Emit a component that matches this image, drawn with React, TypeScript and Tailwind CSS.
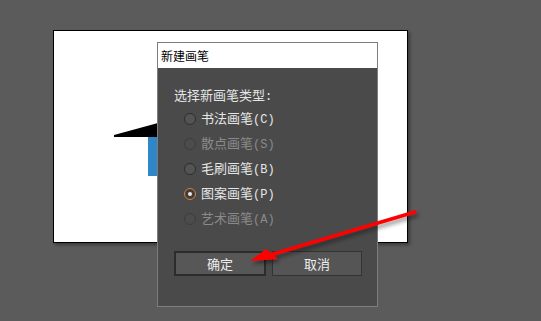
import React from "react";

const cjk = { fontFamily: '"Noto Sans CJK SC", "Noto Sans", sans-serif' };
const mono = { fontFamily: '"Liberation Mono", monospace' };

function Radio({ label, key2, state }: { label: string; key2: string; state: "on" | "off" | "disabled" }) {
  const disabled = state === "disabled";
  return (
    <div className="flex items-center h-[25px]">
      <span
        className={
          "w-[12px] h-[12px] rounded-full flex items-center justify-center border " +
          (state === "on"
            ? "border-[#d9822b] bg-[#3e3e3e]"
            : disabled
            ? "border-[#3d3d3d] bg-[#4c4c4c]"
            : "border-[#2e2e2e] bg-[#545454]")
        }
      >
        {state === "on" && <span className="w-[4px] h-[4px] rounded-full bg-[#e8e8e8]" />}
      </span>
      <span
        className={"ml-[5px] text-[13px] leading-none " + (disabled ? "text-[#8a8a8a]" : "text-[#e6e6e6]")}
        style={cjk}
      >
        {label}
        <span className="text-[12px]" style={mono}>
          ({key2})
        </span>
      </span>
    </div>
  );
}

export default function App() {
  return (
    <div className="relative w-[541px] h-[321px] bg-[#5b5b5b] overflow-hidden">
      <div className="pl-[53px] pt-[30px]">
        <div className="relative w-[355px] h-[213px] bg-white border-[1.5px] border-black shadow-[2px_2px_3px_rgba(0,0,0,0.35)]">
          <svg className="absolute left-0 top-0" width="355" height="213">
            <rect x="94" y="99" width="12" height="46" fill="#2f86c8" />
            <polygon points="60,104 104,92 104,106 60,106" fill="#000" />
          </svg>
        </div>
      </div>

      <div className="absolute left-[157px] top-[42px] w-[221px] h-[265px] border border-[#7d7d7d] bg-[#4a4a4a] flex flex-col">
        <div className="h-[25px] bg-white flex items-center pl-[3px]">
          <span className="text-[12px] text-black leading-none" style={cjk}>
            新建画笔
          </span>
        </div>
        <div className="pl-[16px] pt-[20px]">
          <div className="text-[13px] text-[#e6e6e6] leading-none" style={cjk}>
            选择新画笔类型<span style={mono} className="text-[12px]">:</span>
          </div>
        </div>
        <div className="pl-[26px] pt-[3px] flex flex-col">
          <Radio label="书法画笔" key2="C" state="off" />
          <Radio label="散点画笔" key2="S" state="disabled" />
          <Radio label="毛刷画笔" key2="B" state="off" />
          <Radio label="图案画笔" key2="P" state="on" />
          <Radio label="艺术画笔" key2="A" state="disabled" />
        </div>
        <div className="flex pl-[16px] pt-[20px] gap-[6px]">
          <div className="w-[92px] h-[25px] border-2 border-[#2c2c2c] bg-[#575757] flex items-center justify-center">
            <span className="text-[13px] text-[#eeeeee] leading-none" style={cjk}>
              确定
            </span>
          </div>
          <div className="w-[90px] h-[25px] border border-[#333333] bg-[#555555] flex items-center justify-center">
            <span className="text-[13px] text-[#eeeeee] leading-none" style={cjk}>
              取消
            </span>
          </div>
        </div>
      </div>

      <svg className="absolute left-0 top-0" width="541" height="321">
        <defs>
          <filter id="sh" x="-20%" y="-50%" width="140%" height="200%">
            <feDropShadow dx="2" dy="3" stdDeviation="2" floodColor="#000" floodOpacity="0.45" />
          </filter>
        </defs>
        <g filter="url(#sh)">
          <line x1="415" y1="212" x2="270" y2="255" stroke="#ff0000" strokeWidth="3.5" strokeLinecap="round" />
          <polygon points="250,261 266,249 278,259" fill="#ff0000" />
        </g>
      </svg>
    </div>
  );
}
